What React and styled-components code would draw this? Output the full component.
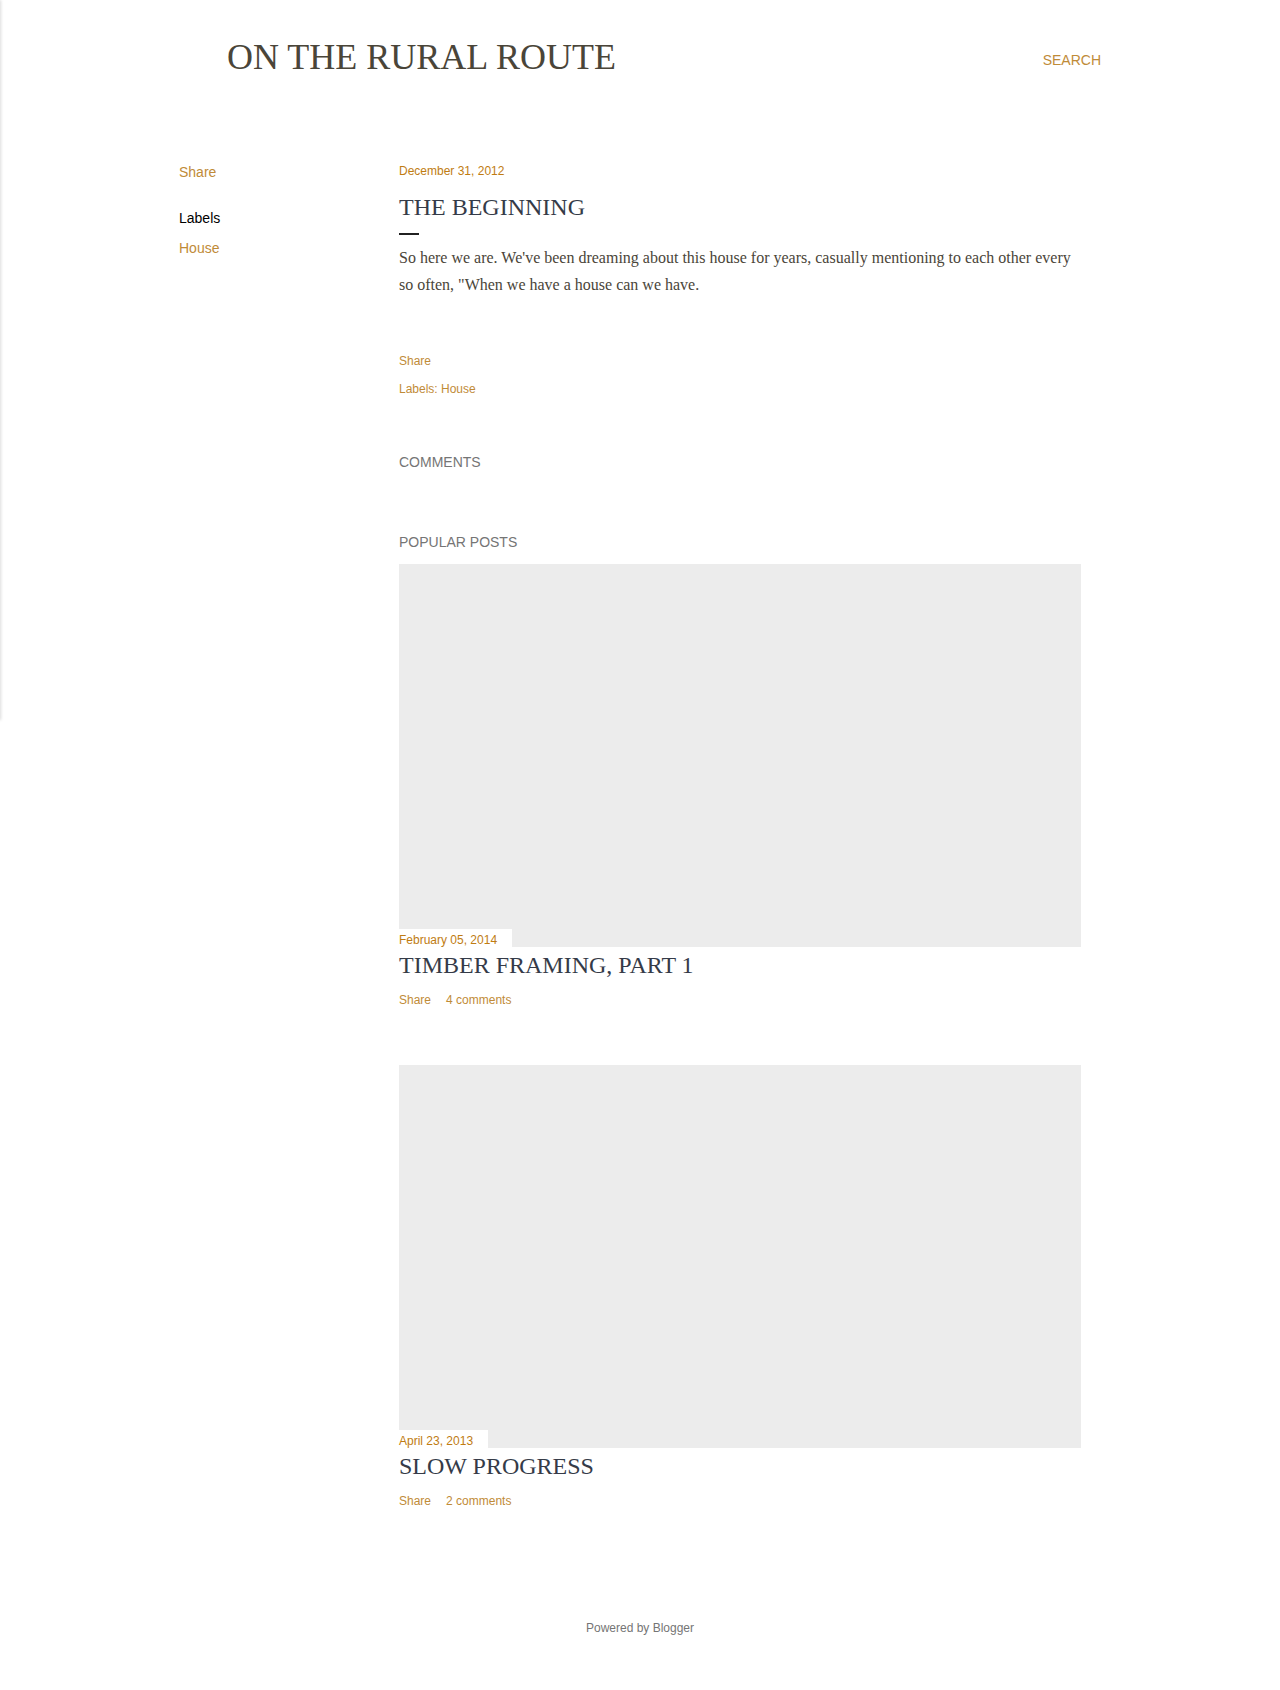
import React from "react";
import styled, { createGlobalStyle } from "styled-components";

const posts = [
  {
    date: "February 05, 2014",
    title: "TIMBER FRAMING, PART 1",
    comments: "4 comments",
  },
  {
    date: "April 23, 2013",
    title: "SLOW PROGRESS",
    comments: "2 comments",
  },
];

const App = () => {
  return (
    <Page>
      <GlobalStyle />
      <Drawer />
      <Container>
        <Header>
          <BlogTitle>ON THE RURAL ROUTE</BlogTitle>
          <SearchLink href="#">SEARCH</SearchLink>
        </Header>
        <Layout>
          <Sidebar>
            <SideLink href="#">Share</SideLink>
            <SideHeading>Labels</SideHeading>
            <SideLink href="#" $gap={10}>
              House
            </SideLink>
          </Sidebar>
          <Main>
            <DateHeader>December 31, 2012</DateHeader>
            <PostTitle $top={13}>THE BEGINNING</PostTitle>
            <TitleBar />
            <PostBody>
              So here we are. We've been dreaming about this house for years,
              casually mentioning to each other every so often, "When we have a
              house can we have.
            </PostBody>
            <FooterLink href="#" $top={55}>
              Share
            </FooterLink>
            <FooterLink href="#" $top={12}>
              Labels: House
            </FooterLink>
            <SectionTitle $top={55}>COMMENTS</SectionTitle>
            <SectionTitle $top={60}>POPULAR POSTS</SectionTitle>
            <PopularList>
              {posts.map((post) => (
                <PopularPost key={post.title}>
                  <Snippet>
                    <SnippetDate>{post.date}</SnippetDate>
                  </Snippet>
                  <PostTitle $top={3}>{post.title}</PostTitle>
                  <MetaRow>
                    <FooterLink href="#">Share</FooterLink>
                    <FooterLink href="#">{post.comments}</FooterLink>
                  </MetaRow>
                </PopularPost>
              ))}
            </PopularList>
          </Main>
        </Layout>
      </Container>
      <Footer>Powered by Blogger</Footer>
    </Page>
  );
};

const GlobalStyle = createGlobalStyle`
  body {
    margin: 0;
    background: #ffffff;
    font-family: "Liberation Sans", Arial, sans-serif;
  }
`;

const Page = styled.div`
  position: relative;
  min-height: 1690px;
  overflow: hidden;
`;

const Drawer = styled.div`
  position: absolute;
  top: 0;
  left: -300px;
  width: 300px;
  height: 720px;
  background: #ffffff;
  box-shadow: 1px 0 3px rgba(0, 0, 0, 0.14);
`;

const Container = styled.div`
  width: 922px;
  margin: 0 auto;
`;

const Header = styled.header`
  display: flex;
  justify-content: space-between;
  align-items: flex-start;
  padding: 39px 0 0 48px;
`;

const BlogTitle = styled.h1`
  margin: 0;
  font-family: "Liberation Serif", "Times New Roman", serif;
  font-weight: normal;
  font-size: 36px;
  line-height: 36px;
  color: #4a4539;
`;

const SearchLink = styled.a`
  margin-top: 14px;
  font-size: 14px;
  line-height: 14px;
  color: #bf8b38;
  text-decoration: none;
`;

const Layout = styled.div`
  display: grid;
  grid-template-columns: 220px 682px;
  padding-top: 87px;
`;

const Sidebar = styled.aside`
  display: flex;
  flex-direction: column;
  align-items: flex-start;
`;

const SideLink = styled.a`
  margin-top: ${(p) => p.$gap || 0}px;
  font-size: 14px;
  line-height: 20px;
  color: #bf8b38;
  text-decoration: none;
`;

const SideHeading = styled.h3`
  margin: 26px 0 0;
  font-size: 14px;
  line-height: 20px;
  font-weight: normal;
  color: #000000;
`;

const Main = styled.main`
  display: flex;
  flex-direction: column;
  align-items: flex-start;
  padding-top: 1px;
`;

const DateHeader = styled.div`
  font-size: 12px;
  line-height: 16px;
  color: #c07c12;
`;

const PostTitle = styled.h3`
  margin: ${(p) => p.$top}px 0 0;
  font-family: "Liberation Serif", "Times New Roman", serif;
  font-weight: normal;
  font-size: 24px;
  line-height: 30px;
  color: #353b48;
`;

const TitleBar = styled.div`
  width: 20px;
  height: 2px;
  margin-top: 11px;
  background: #212121;
`;

const PostBody = styled.p`
  margin: 9px 0 0;
  font-family: "Liberation Serif", "Times New Roman", serif;
  font-size: 16px;
  line-height: 27px;
  color: #4a4539;
`;

const FooterLink = styled.a`
  margin-top: ${(p) => p.$top || 0}px;
  font-size: 12px;
  line-height: 16px;
  color: #bf8b38;
  text-decoration: none;
`;

const SectionTitle = styled.h3`
  margin: ${(p) => p.$top}px 0 0;
  font-size: 14px;
  line-height: 20px;
  font-weight: normal;
  color: #757575;
`;

const PopularList = styled.div`
  display: flex;
  flex-direction: column;
  gap: 57px;
  width: 100%;
  margin-top: 12px;
`;

const PopularPost = styled.article`
  display: flex;
  flex-direction: column;
  align-items: flex-start;
`;

const Snippet = styled.div`
  position: relative;
  width: 100%;
  height: 383px;
  background: #ececec;
`;

const SnippetDate = styled.span`
  position: absolute;
  left: 0;
  bottom: 0;
  padding: 4px 15px 0 0;
  background: #ffffff;
  font-size: 12px;
  line-height: 14px;
  color: #c07c12;
`;

const MetaRow = styled.div`
  display: flex;
  gap: 15px;
  margin-top: 12px;
`;

const Footer = styled.footer`
  margin-top: 111px;
  text-align: center;
  font-size: 12px;
  line-height: 16px;
  color: #757575;
`;

export default App;
